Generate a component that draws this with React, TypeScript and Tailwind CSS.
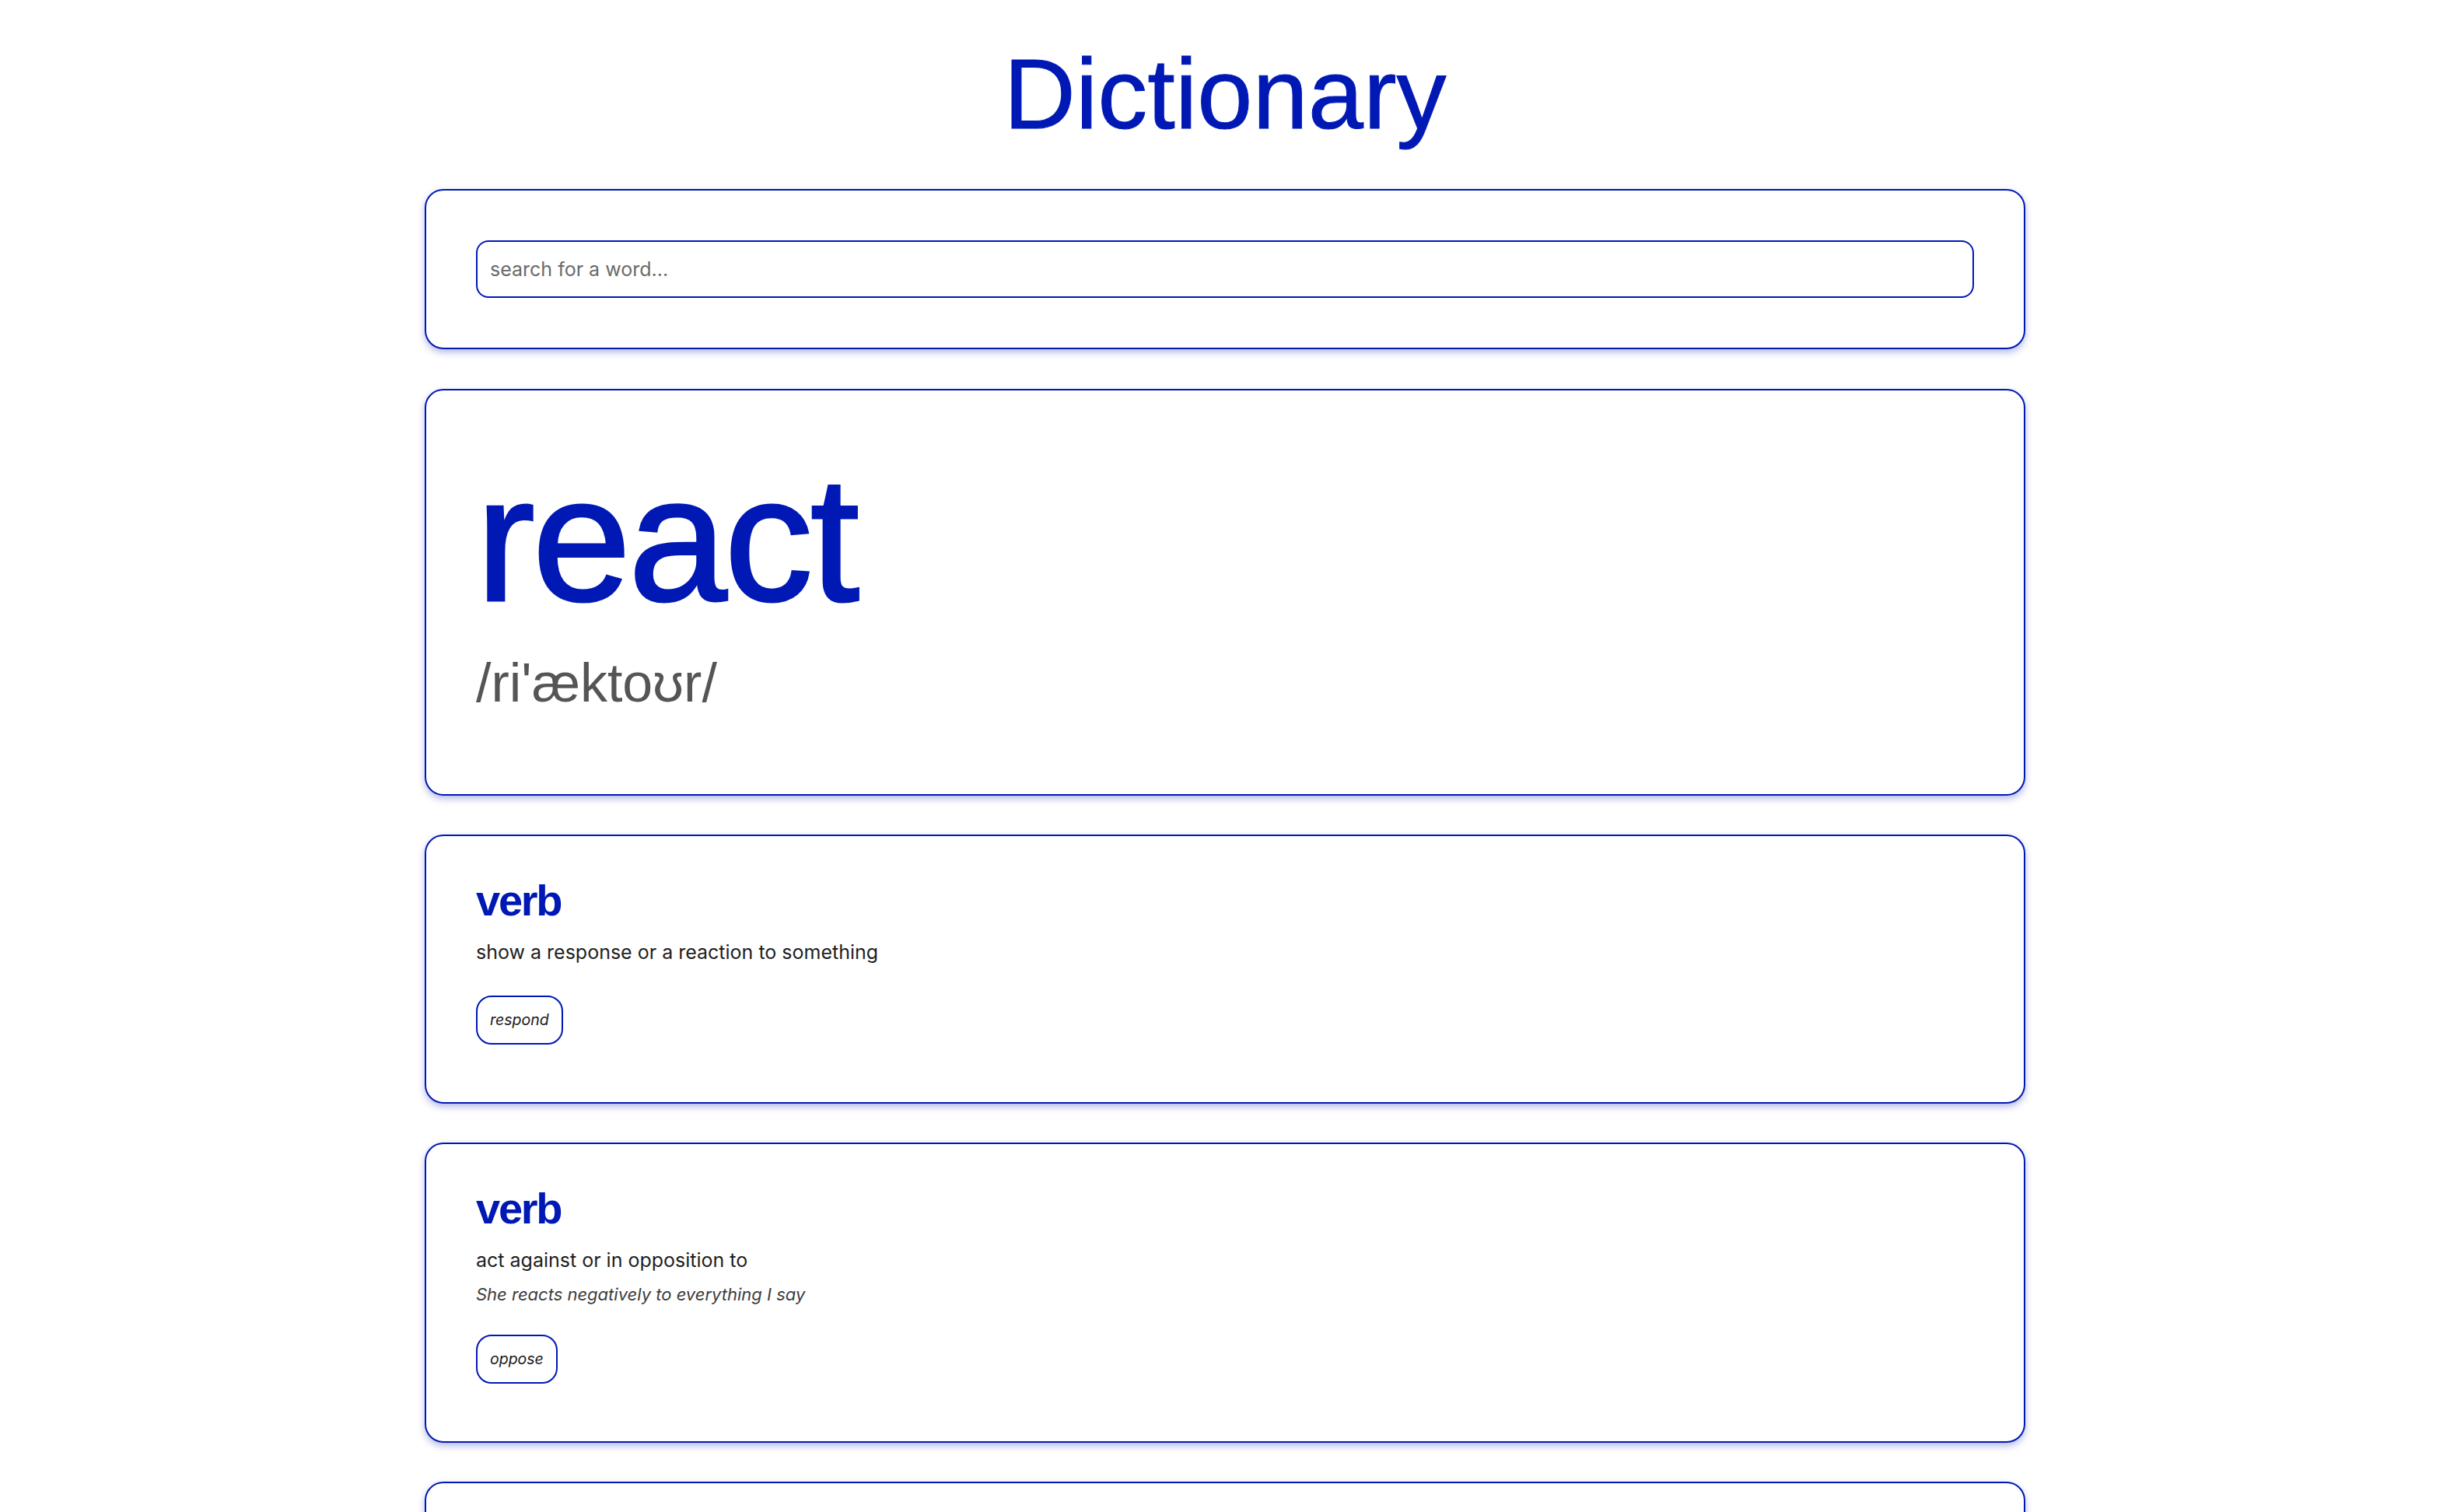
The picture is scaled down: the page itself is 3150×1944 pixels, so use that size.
import { useState } from 'react';

type Meaning = {
  partOfSpeech: string;
  definition: string;
  example?: string;
  synonyms: string[];
};

const WORD = {
  word: 'react',
  phonetic: "/ri'æktoʊr/",
  meanings: [
    { partOfSpeech: 'verb', definition: 'show a response or a reaction to something', synonyms: ['respond'] },
    {
      partOfSpeech: 'verb',
      definition: 'act against or in opposition to',
      example: 'She reacts negatively to everything I say',
      synonyms: ['oppose'],
    },
    {
      partOfSpeech: 'verb',
      definition: 'undergo a chemical reaction; react with another substance under certain conditions',
      example: 'The hydrogen and the oxygen react',
      synonyms: [],
    },
  ] as Meaning[],
};

function MeaningCard({ meaning }: { meaning: Meaning }) {
  return (
    <section className="rounded-3xl border-2 border-[#0019b4] bg-white px-16 pt-12 pb-[74px] shadow-[0_4px_10px_rgba(0,25,180,0.3)]">
      <h3 className="font-['Liberation_Sans',Arial,sans-serif] text-[56px] leading-[70px] font-bold tracking-[-0.04em] text-[#0019b4]">
        {meaning.partOfSpeech}
      </h3>
      <p className="mt-4 text-[25px] leading-[30px] text-[#1f1f1f]">{meaning.definition}</p>
      {meaning.example && (
        <p className="mt-4 text-[22px] leading-[27px] italic text-[#3d3d3d]">{meaning.example}</p>
      )}
      {meaning.synonyms.length > 0 && (
        <div className={meaning.example ? 'mt-[38px] flex gap-3' : 'mt-[41px] flex gap-3'}>
          {meaning.synonyms.map((s) => (
            <button
              key={s}
              className="flex h-[63px] items-center rounded-[20px] border-2 border-[#0019b4] bg-white px-4 text-[19.5px] italic text-[#1a1a1a]"
            >
              {s}
            </button>
          ))}
        </div>
      )}
    </section>
  );
}

export default function App() {
  const [query, setQuery] = useState('');

  return (
    <div className="min-h-screen bg-white pt-[57px] pb-24 font-['Inter',sans-serif]">
      <h1 className="mb-[58px] text-center font-['Liberation_Sans',Arial,sans-serif] text-[128px] leading-[128px] text-[#0019b4] [-webkit-text-stroke:1px_#0019b4]">
        Dictionary
      </h1>

      <div className="mx-auto flex w-[2058px] flex-col">
        {/* Search */}
        <div className="mb-[51px] rounded-3xl border-2 border-[#0019b4] bg-white p-16 shadow-[0_4px_10px_rgba(0,25,180,0.3)]">
          <input
            value={query}
            onChange={(e) => setQuery(e.target.value)}
            placeholder="search for a word..."
            className="h-[74px] w-full rounded-2xl border-2 border-[#0019b4] bg-white px-4 text-[25px] text-[#1f1f1f] outline-none placeholder:text-[#6b6b6b]"
          />
        </div>

        {/* Word */}
        <div className="mb-[50px] rounded-3xl border-2 border-[#0019b4] bg-white px-16 pt-16 pb-[103px] shadow-[0_4px_10px_rgba(0,25,180,0.3)]">
          <h2 className="font-['Liberation_Sans',Arial,sans-serif] text-[228px] leading-[254px] tracking-[-0.015em] text-[#0019b4] [-webkit-text-stroke:3px_#0019b4]">
            {WORD.word}
          </h2>
          <p className="mt-[18px] font-['Liberation_Sans','DejaVu_Sans',sans-serif] text-[70px] leading-[80px] text-[#555555]">
            {WORD.phonetic}
          </p>
        </div>

        {/* Meanings */}
        <div className="flex flex-col gap-[50px]">
          {WORD.meanings.map((m, i) => (
            <MeaningCard key={i} meaning={m} />
          ))}
        </div>
      </div>
    </div>
  );
}
